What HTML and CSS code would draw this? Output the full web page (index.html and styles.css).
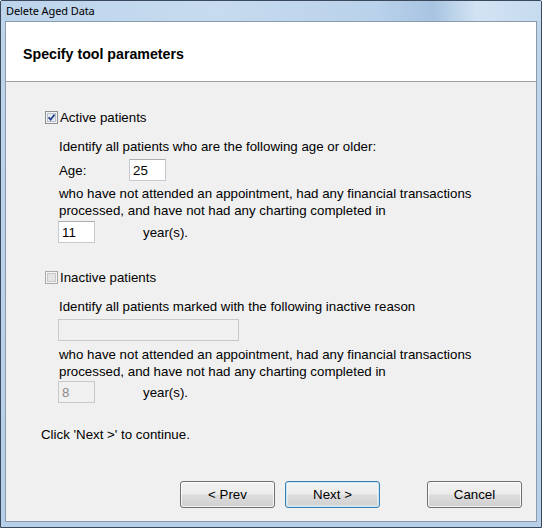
FILE: index.html
```html
<!DOCTYPE html>
<html>
<head>
<meta charset="utf-8">
<link rel="stylesheet" href="styles.css">
</head>
<body>
<div class="window">
  <div class="titlebar">Delete Aged Data</div>
  <div class="client">
    <div class="header"><h1>Specify tool parameters</h1></div>
    <div class="content">
      <label class="check-row sec1">
        <svg class="checkbox" width="13" height="13" viewBox="0 0 13 13">
          <rect x="0.5" y="0.5" width="12" height="12" fill="#f4f4f4" stroke="#8e8f8f"/>
          <rect x="2.5" y="2.5" width="8" height="8" fill="#e6ebf2" stroke="#b8c2ce"/>
          <path d="M3.5 6.2 L5.6 8.6 L9.6 3.6" fill="none" stroke="#24448c" stroke-width="1.7"/>
        </svg>
        <span>Active patients</span>
      </label>
      <div class="indent">
        <p class="line gap12">Identify all patients who are the following age or older:</p>
        <div class="field-row gap4">
          <span class="age-label">Age:</span>
          <span class="textbox age">25</span>
        </div>
        <p class="para gap4">who have not attended an appointment, had any financial transactions<br>processed, and have not had any charting completed in</p>
        <div class="field-row gap2">
          <span class="textbox small">11</span>
          <span class="years">year(s).</span>
        </div>
      </div>

      <label class="check-row sec2">
        <svg class="checkbox" width="13" height="13" viewBox="0 0 13 13">
          <rect x="0.5" y="0.5" width="12" height="12" fill="#f4f4f4" stroke="#a9a9a9"/>
          <rect x="2.5" y="2.5" width="8" height="8" fill="#e4e4e4" stroke="#c8c8c8"/>
        </svg>
        <span>Inactive patients</span>
      </label>
      <div class="indent">
        <p class="line gap12">Identify all patients marked with the following inactive reason</p>
        <div class="field-row gap4">
          <span class="textbox disabled wide"></span>
        </div>
        <p class="para gap5">who have not attended an appointment, had any financial transactions<br>processed, and have not had any charting completed in</p>
        <div class="field-row gap1">
          <span class="textbox small disabled">8</span>
          <span class="years">year(s).</span>
        </div>
      </div>

      <p class="hint">Click 'Next &gt;' to continue.</p>

      <div class="buttons">
        <button class="btn">&lt; Prev</button>
        <button class="btn default">Next &gt;</button>
        <button class="btn cancel">Cancel</button>
      </div>
    </div>
  </div>
</div>
</body>
</html>
```
FILE: styles.css
```css
* { box-sizing: border-box; }
html, body { margin: 0; padding: 0; background: #ffffff; }
body { font-family: "Liberation Sans", Arial, sans-serif; font-size: 13.3px; color: #000; }

.window {
  width: 542px;
  height: 528px;
  border: 1px solid #3a4a5c;
  background: linear-gradient(to bottom, #c2d8ee 0px, #bed4eb 40px, #b7cfe8 100%);
  padding: 0 4px 5px 4px;
  display: flex;
  flex-direction: column;
  border-radius: 2px 2px 0 0;
}

.titlebar {
  height: 20px;
  margin: 0 -4px;
  padding: 3px 0 0 5px;
  font-family: "Noto Sans", "Open Sans", sans-serif;
  font-size: 11px;
  line-height: 14px;
  color: #000;
  background: linear-gradient(to right, #bcd4ec 0%, #c6dbef 40%, #b9d1ea 70%, #a8c4e1 80%, #d2e3f3 88%, #c6dbef 100%);
  letter-spacing: -0.1px;
}

.client {
  flex: 1;
  border: 1px solid #8a9aad;
  background: #f0f0f0;
  display: flex;
  flex-direction: column;
}

.header {
  height: 60px;
  background: #ffffff;
  border-bottom: 1px solid #a0a0a0;
  padding: 24px 0 0 17px;
}
.header h1 {
  margin: 0;
  font-size: 14.2px;
  line-height: 17px;
  font-weight: bold;
}

.content {
  flex: 1;
  display: flex;
  flex-direction: column;
  padding: 0 14px 13px 35px;
}

p { margin: 0; }

.check-row {
  display: flex;
  align-items: center;
  height: 17px;
  line-height: 17px;
  padding-left: 4px;
}
.check-row .checkbox { margin-right: 2px; flex: none; }
.sec1 { margin-top: 27px; }
.sec2 { margin-top: 26px; }

.indent { padding-left: 18px; }

.line, .para { line-height: 17px; }
.gap12 { margin-top: 12px; }
.gap5 { margin-top: 5px; }
.gap4 { margin-top: 4px; }
.gap2 { margin-top: 2px; }
.gap1 { margin-top: 1px; }

.field-row {
  display: flex;
  align-items: center;
  height: 22px;
}
.age-label { width: 70px; }

.textbox {
  display: block;
  width: 37px;
  height: 22px;
  margin-left: -1px;
  background: #ffffff;
  border: 1px solid #c5c9d0;
  border-top-color: #abadb3;
  padding: 2px 0 0 3px;
  line-height: 17px;
}
.textbox.age { margin-left: 0; }
.textbox.wide { width: 181px; }
.textbox.disabled {
  background: #f0f0f0;
  border-color: #c9c9c9;
  color: #8b8b8b;
}
.years { margin-left: 48px; }

.hint {
  margin-top: 23px;
  line-height: 17px;
}

.buttons {
  margin-top: auto;
  display: flex;
  justify-content: flex-end;
  gap: 10px;
}
.btn {
  width: 95px;
  height: 27px;
  font-family: "Liberation Sans", Arial, sans-serif;
  font-size: 13.3px;
  color: #000;
  border: 1px solid #707070;
  border-radius: 3px;
  background: linear-gradient(to bottom, #f2f2f2 0%, #ebebeb 48%, #dddddd 52%, #cfcfcf 100%);
  box-shadow: inset 0 0 0 1px rgba(255,255,255,0.75);
  padding: 0;
}
.btn.default {
  border-color: #3c7fb1;
  box-shadow: inset 0 0 0 1px #c4e5f6, inset 0 0 0 2px rgba(255,255,255,0.4);
}
.btn.cancel { margin-left: 37px; }
```
